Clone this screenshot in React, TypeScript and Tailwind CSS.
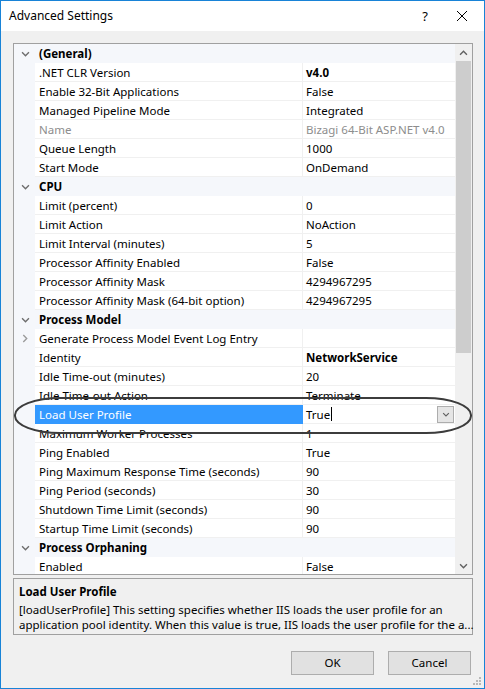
import type { ReactNode } from "react";

type Row =
  | { kind: "cat"; label: string }
  | {
      kind: "prop";
      name: string;
      value?: string;
      bold?: boolean;
      disabled?: boolean;
      expandable?: boolean;
      selected?: boolean;
    };

const rows: Row[] = [
  { kind: "cat", label: "(General)" },
  { kind: "prop", name: ".NET CLR Version", value: "v4.0", bold: true },
  { kind: "prop", name: "Enable 32-Bit Applications", value: "False" },
  { kind: "prop", name: "Managed Pipeline Mode", value: "Integrated" },
  { kind: "prop", name: "Name", value: "Bizagi 64-Bit ASP.NET v4.0", disabled: true },
  { kind: "prop", name: "Queue Length", value: "1000" },
  { kind: "prop", name: "Start Mode", value: "OnDemand" },
  { kind: "cat", label: "CPU" },
  { kind: "prop", name: "Limit (percent)", value: "0" },
  { kind: "prop", name: "Limit Action", value: "NoAction" },
  { kind: "prop", name: "Limit Interval (minutes)", value: "5" },
  { kind: "prop", name: "Processor Affinity Enabled", value: "False" },
  { kind: "prop", name: "Processor Affinity Mask", value: "4294967295" },
  { kind: "prop", name: "Processor Affinity Mask (64-bit option)", value: "4294967295" },
  { kind: "cat", label: "Process Model" },
  { kind: "prop", name: "Generate Process Model Event Log Entry", expandable: true },
  { kind: "prop", name: "Identity", value: "NetworkService", bold: true },
  { kind: "prop", name: "Idle Time-out (minutes)", value: "20" },
  { kind: "prop", name: "Idle Time-out Action", value: "Terminate" },
  { kind: "prop", name: "Load User Profile", value: "True", selected: true },
  { kind: "prop", name: "Maximum Worker Processes", value: "1" },
  { kind: "prop", name: "Ping Enabled", value: "True" },
  { kind: "prop", name: "Ping Maximum Response Time (seconds)", value: "90" },
  { kind: "prop", name: "Ping Period (seconds)", value: "30" },
  { kind: "prop", name: "Shutdown Time Limit (seconds)", value: "90" },
  { kind: "prop", name: "Startup Time Limit (seconds)", value: "90" },
  { kind: "cat", label: "Process Orphaning" },
  { kind: "prop", name: "Enabled", value: "False" },
];

function Chevron({ dir, className }: { dir: "down" | "right" | "up"; className?: string }) {
  const d =
    dir === "down" ? "M1 1.5 L5 5.5 L9 1.5" : dir === "up" ? "M1 5.5 L5 1.5 L9 5.5" : "M1.5 1 L5.5 5 L1.5 9";
  const box = dir === "right" ? "0 0 7 10" : "0 0 10 7";
  return (
    <svg viewBox={box} className={className} fill="none" stroke="currentColor" strokeWidth="1.6">
      <path d={d} />
    </svg>
  );
}

function Gutter({ children }: { children?: ReactNode }) {
  return (
    <div className="flex h-full w-[21px] shrink-0 items-center justify-center bg-[#f5f7fb]">
      {children}
    </div>
  );
}

function GridRow({ row }: { row: Row }) {
  if (row.kind === "cat") {
    return (
      <div className="flex h-[19px] shrink-0 items-center bg-[#f5f7fb]">
        <Gutter>
          <Chevron dir="down" className="ml-[2px] h-[6px] w-[9px] text-[#6d6d6d]" />
        </Gutter>
        <span className="pl-[4px] pt-[1px] font-bold leading-[16px]">{row.label}</span>
      </div>
    );
  }
  const textColor = row.disabled ? "text-[#8d8d8d]" : "text-black";
  return (
    <div className="flex h-[19px] shrink-0">
      <Gutter>
        {row.expandable && <Chevron dir="right" className="ml-[1px] h-[9px] w-[6px] text-[#9a9a9a]" />}
      </Gutter>
      <div
        className={`flex w-[268px] shrink-0 items-center border-b border-r pl-[4px] ${
          row.selected
            ? "border-[#3399ff] bg-[#3399ff] text-white"
            : `border-[#f0f0f0] bg-white ${textColor}`
        }`}
      >
        <span className="whitespace-nowrap pt-[1px] leading-[16px]">{row.name}</span>
      </div>
      <div
        className={`flex min-w-0 flex-1 items-center border-b border-[#f0f0f0] bg-white pl-[3px] ${textColor} ${
          row.bold ? "font-bold" : ""
        }`}
      >
        <span className="whitespace-nowrap pt-[1px] leading-[16px]">{row.value}</span>
        {row.selected && (
          <>
            <span className="ml-[1px] h-[14px] w-px bg-black" />
            <div className="ml-auto mr-px flex h-[17px] w-[17px] items-center justify-center border border-[#adadad] bg-[#e5e5e5]">
              <Chevron dir="down" className="h-[5px] w-[8px] text-[#606060]" />
            </div>
          </>
        )}
      </div>
    </div>
  );
}

function Scrollbar() {
  return (
    <div className="flex w-[17px] shrink-0 flex-col bg-[#f0f0f0]">
      <div className="flex h-[17px] items-center justify-center">
        <Chevron dir="up" className="h-[6px] w-[9px] text-[#606060]" />
      </div>
      <div className="mx-px h-[292px] bg-[#cdcdcd]" />
      <div className="flex-1" />
      <div className="flex h-[17px] items-center justify-center">
        <Chevron dir="down" className="h-[6px] w-[9px] text-[#606060]" />
      </div>
    </div>
  );
}

function Button({ children }: { children: ReactNode }) {
  return (
    <button className="flex h-[24px] w-[83px] items-center justify-center border border-[#adadad] bg-[#e1e1e1] text-black">
      {children}
    </button>
  );
}

export default function App() {
  return (
    <div className="relative flex h-[689px] w-[485px] flex-col border border-[#1883d7] bg-[#f0f0f0] font-['Noto_Sans',sans-serif] text-[11.5px] leading-none text-black">
      <div className="flex h-[30px] shrink-0 items-center bg-white pl-[8px]">
        <span className="text-[12px]">Advanced Settings</span>
        <span className="ml-auto mr-[29px] text-[13px]">?</span>
        <svg viewBox="0 0 10 10" className="mr-[17px] h-[10px] w-[10px]" fill="none" stroke="#000" strokeWidth="1">
          <path d="M0 0 L10 10 M10 0 L0 10" />
        </svg>
      </div>

      <div className="flex flex-1 flex-col px-[12px] pt-[12px]">
        <div className="flex h-[532px] w-[460px] overflow-hidden border border-[#a0a0a0]">
          <div className="flex min-w-0 flex-1 flex-col overflow-hidden">
            {rows.map((r, i) => (
              <GridRow key={i} row={r} />
            ))}
          </div>
          <Scrollbar />
        </div>

        <div className="mt-[3px] h-[57px] w-[460px] border border-[#a0a0a0] px-[5px] pt-[5px]">
          <div className="font-bold leading-[16px]">Load User Profile</div>
          <p className="mt-[2px] whitespace-nowrap leading-[15px]">
            [loadUserProfile] This setting specifies whether IIS loads the user profile for an
            <br />
            application pool identity. When this value is true, IIS loads the user profile for the a...
          </p>
        </div>

        <div className="mt-[16px] flex justify-end gap-[14px] pr-[1px]">
          <Button>OK</Button>
          <Button>Cancel</Button>
        </div>
      </div>

      <svg viewBox="0 0 10 10" className="absolute bottom-[2px] right-[2px] h-[10px] w-[10px]" fill="#b8b8b8">
        <rect x="7" y="1" width="2" height="2" />
        <rect x="4" y="4" width="2" height="2" />
        <rect x="7" y="4" width="2" height="2" />
        <rect x="1" y="7" width="2" height="2" />
        <rect x="4" y="7" width="2" height="2" />
        <rect x="7" y="7" width="2" height="2" />
      </svg>

      <div className="pointer-events-none absolute left-[13px] top-[396px] h-[37px] w-[458px] rounded-[46px/18px] border-2 border-[#3c3c3c]" />
    </div>
  );
}
